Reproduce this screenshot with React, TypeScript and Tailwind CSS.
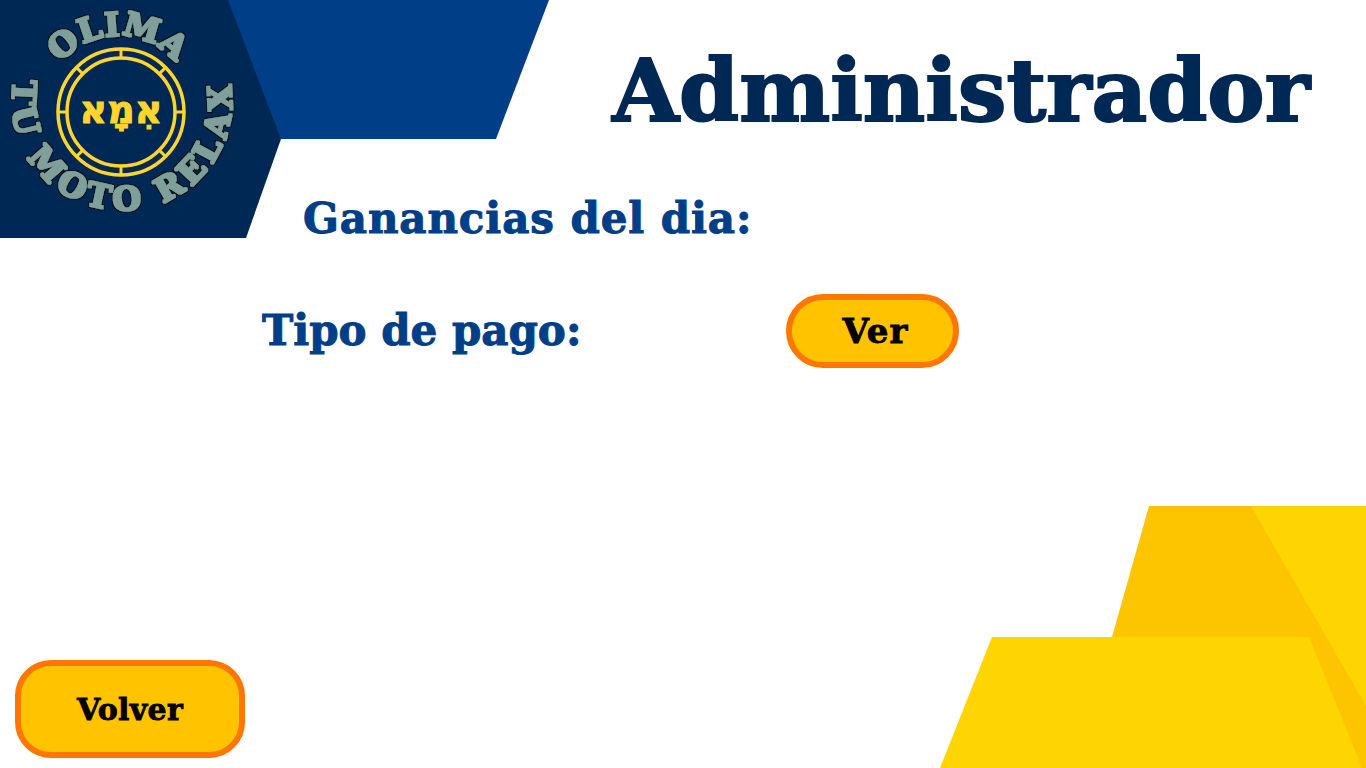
import React from "react";

const serif = "font-['DejaVu_Serif',serif] font-bold";

const Backdrop: React.FC = () => (
  <svg className="absolute inset-0" width="1366" height="768" viewBox="0 0 1366 768">
    <polygon points="200,0 549,0 496,139 260,139" fill="#003f88" />
    <polygon points="0,0 228,0 281,139 246,238 0,238" fill="#002855" />
    <polygon points="1149,506 1366,506 1366,768 1112,768 1112,637" fill="#fdc500" />
    <polygon points="1251,506 1366,506 1366,706" fill="#ffd500" />
    <polygon points="992,637 1309,637 1362,768 940,768" fill="#ffd500" />
  </svg>
);

const Logo: React.FC = () => {
  const ticks = [0, 45, 90, 135, 180, 225, 270, 315];
  return (
    <svg className="absolute left-0 top-0" width="246" height="238" viewBox="0 0 246 238">
      <defs>
        <path id="arcTop" d="M 42 112 A 76 76 0 0 1 194 112" />
        <path id="arcBottom" d="M 13.7 81 A 110 110 0 1 0 230.3 81" />
        {/* fattens the letters and puts a dark outline round them */}
        <filter id="fatOutline" x="-10%" y="-10%" width="120%" height="120%">
          <feMorphology in="SourceGraphic" operator="dilate" radius="0.5" result="fat" />
          <feMorphology in="SourceAlpha" operator="dilate" radius="1.5" result="wide" />
          <feFlood floodColor="#0b0f14" />
          <feComposite in2="wide" operator="in" result="outline" />
          <feMerge>
            <feMergeNode in="outline" />
            <feMergeNode in="fat" />
          </feMerge>
        </filter>
      </defs>
      <circle cx="121" cy="112" r="63" fill="none" stroke="#ffd52e" strokeWidth="3.5" />
      <circle cx="121" cy="112" r="54" fill="none" stroke="#ffd52e" strokeWidth="3.5" />
      {ticks.map((a) => (
        <line
          key={a}
          x1="121"
          y1="49"
          x2="121"
          y2="58"
          stroke="#ffd52e"
          strokeWidth="3"
          transform={`rotate(${a} 121 112)`}
        />
      ))}
      <text
        x="121"
        y="123"
        textAnchor="middle"
        fill="#ffd52e"
        stroke="#ffd52e"
        strokeWidth="1"
        fontFamily="'DejaVu Sans', sans-serif"
        fontWeight="700"
        fontSize="38"
        direction="rtl"
      >
        אִמָא
      </text>
      <g
        fill="#7f9f9b"
        filter="url(#fatOutline)"
        fontFamily="'DejaVu Serif', serif"
        fontWeight="700"
      >
        <text fontSize="33" letterSpacing="0.5">
          <textPath href="#arcTop" startOffset="50%" textAnchor="middle">
            OLIMA
          </textPath>
        </text>
        <text fontSize="33" letterSpacing="5">
          <textPath href="#arcBottom" startOffset="50%" textAnchor="middle">
            TU MOTO RELAX
          </textPath>
        </text>
      </g>
    </svg>
  );
};

const App: React.FC = () => {
  return (
    <div className="relative h-[768px] w-full overflow-hidden bg-white">
      <Backdrop />
      <Logo />
      <div className="relative flex h-full flex-col">
        <div className="flex h-[192px] items-start justify-end pr-[56px] pt-[42px]">
          <h1
            className={`${serif} text-[86px] leading-[1.15] text-[#002855] [-webkit-text-stroke:2px_#002855]`}
          >
            Administrador
          </h1>
        </div>
        <h2
          className={`${serif} pl-[303px] text-[42px] leading-[54px] tracking-[0.9px] text-[#003f88] [-webkit-text-stroke:1px_#003f88]`}
        >
          Ganancias del dia:
        </h2>
        <div className="mt-[48px] flex items-center pl-[262px]">
          <h2
            className={`${serif} w-[524px] text-[42px] leading-[54px] text-[#003f88] [-webkit-text-stroke:1px_#003f88]`}
          >
            Tipo de pago:
          </h2>
          <button
            className={`${serif} flex h-[74px] w-[173px] items-center justify-center rounded-[37px] border-[6px] border-[#ff7700] bg-[#ffc300] pl-[6px] text-[34px] tracking-[1px] text-black [-webkit-text-stroke:0.8px_#000]`}
          >
            Ver
          </button>
        </div>
        <div className="mt-auto pb-[10px] pl-[15px]">
          <button
            className={`${serif} flex h-[98px] w-[230px] items-center justify-center rounded-[36px] border-[6px] border-[#ff7700] bg-[#ffc300] text-[30px] tracking-[0.3px] text-black [-webkit-text-stroke:0.8px_#000]`}
          >
            Volver
          </button>
        </div>
      </div>
    </div>
  );
};

export default App;
